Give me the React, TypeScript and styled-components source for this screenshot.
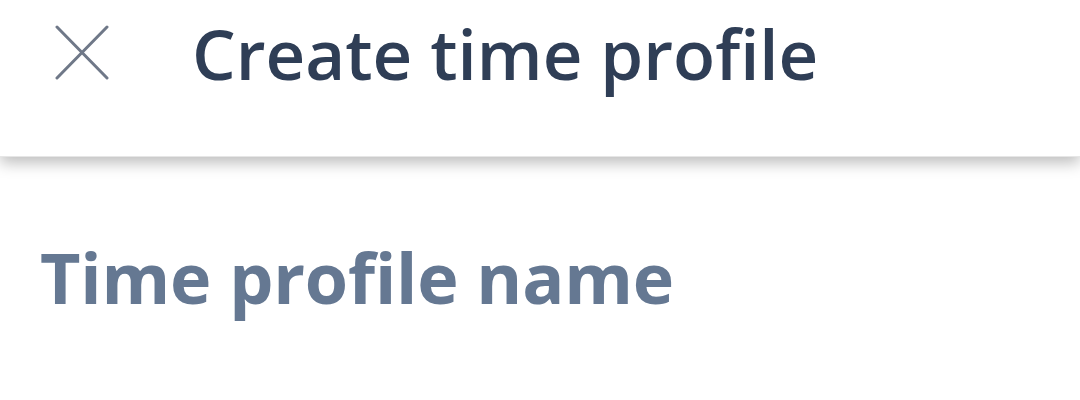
import React from 'react';
import styled, { createGlobalStyle } from 'styled-components';

const GlobalStyle = createGlobalStyle`
  html, body {
    margin: 0;
    padding: 0;
    background: #ffffff;
  }
  body {
    font-family: 'Open Sans', 'Noto Sans', sans-serif;
  }
`;

const App: React.FC = () => {
  return (
    <Page>
      <GlobalStyle />
      <Header>
        <CloseButton aria-label="Close">
          <svg width="54" height="55" viewBox="0 0 54 55" fill="none">
            <path d="M2 2 L52 53 M52 2 L2 53" stroke="#6f7888" strokeWidth="3" strokeLinecap="round" />
          </svg>
        </CloseButton>
        <Title>Create time profile</Title>
      </Header>
      <Body>
        <FieldLabel>Time profile name</FieldLabel>
      </Body>
    </Page>
  );
};

export default App;

const Page = styled.div`
  width: 1080px;
  height: 400px;
  overflow: hidden;
  background: #ffffff;
`;

const Header = styled.header`
  position: relative;
  z-index: 1;
  height: 157px;
  display: flex;
  align-items: flex-start;
  padding: 0 0 0 55px;
  gap: 83px;
  background: #ffffff;
  box-shadow: 0 6px 14px rgba(0, 0, 0, 0.26);
  border-bottom: 1px solid #e6e6e6;
  box-sizing: border-box;
`;

const CloseButton = styled.button`
  border: none;
  background: none;
  padding: 0;
  margin-top: 25px;
  width: 54px;
  height: 55px;
  display: flex;
`;

const Title = styled.h1`
  margin: 0;
  margin-top: 5px;
  font-size: 69px;
  line-height: 96px;
  font-weight: 600;
  color: #2f3e56;
  letter-spacing: 0;
`;

const Body = styled.main`
  padding: 72px 0 0 40px;
`;

const FieldLabel = styled.label`
  display: block;
  font-size: 70px;
  line-height: 96px;
  font-weight: 700;
  color: #657892;
  letter-spacing: -0.2px;
`;
